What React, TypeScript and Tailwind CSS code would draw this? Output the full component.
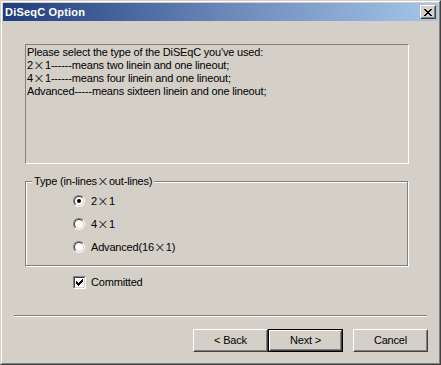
import React from "react";

const Times = () => (
  <span
    className="inline-block w-[12px] text-center text-[14px] leading-[13px] align-top font-extralight tracking-normal"
    style={{ fontFamily: '"DejaVu Sans", "Noto Sans", sans-serif' }}
  >
    ×
  </span>
);

function Radio({ checked, label }: { checked?: boolean; label: React.ReactNode }) {
  return (
    <div className="flex items-center h-[12px]">
      <div className="w-[12px] h-[12px] rounded-full border border-t-[#808080] border-l-[#808080] border-r-white border-b-white">
        <div className="w-full h-full rounded-full border border-t-[#404040] border-l-[#404040] border-r-[#d4d0c8] border-b-[#d4d0c8] bg-white flex items-center justify-center">
          {checked && <div className="w-[4px] h-[4px] rounded-full bg-black" />}
        </div>
      </div>
      <span className="ml-[6px] h-[13px] whitespace-nowrap">{label}</span>
    </div>
  );
}

function Button({ children, isDefault }: { children: React.ReactNode; isDefault?: boolean }) {
  const inner = (
    <div className="w-full h-full border border-t-white border-l-white border-r-[#404040] border-b-[#404040]">
      <div className="w-full h-full border border-t-[#d4d0c8] border-l-[#d4d0c8] border-r-[#808080] border-b-[#808080] flex items-center justify-center">
        {children}
      </div>
    </div>
  );
  return (
    <div className={"w-[75px] h-[23px] " + (isDefault ? "border border-black" : "")}>{inner}</div>
  );
}

export default function App() {
  return (
    <div
      className="w-[441px] h-[365px] border border-t-[#d4d0c8] border-l-[#d4d0c8] border-r-[#404040] border-b-[#404040] text-[11px] leading-[13px] text-black tracking-[-0.18px]"
      style={{ fontFamily: '"Liberation Sans", Arial, sans-serif' }}
    >
      <div className="w-full h-full border border-t-white border-l-white border-r-[#808080] border-b-[#808080] p-px bg-[#d4d0c8] flex flex-col">
        {/* Title bar */}
        <div className="h-[18px] flex items-center bg-gradient-to-r from-[#203d7c] via-[#6a86b8] to-[#a6c6ea] pl-[2px]">
          <span className="text-white font-bold text-[11px] tracking-[0.2px]">DiSeqC Option</span>
          <div className="ml-auto mr-[2px] w-[16px] h-[14px] border border-t-white border-l-white border-r-[#404040] border-b-[#404040]">
            <div className="w-full h-full border border-t-[#d4d0c8] border-l-[#d4d0c8] border-r-[#808080] border-b-[#808080] bg-[#d4d0c8] flex items-center justify-center">
              <svg width="8" height="7" viewBox="0 0 8 7" shapeRendering="crispEdges">
                <path d="M0 0h2v1h-2z M6 0h2v1h-2z M1 1h2v1h-2z M5 1h2v1h-2z M2 2h4v1h-4z M3 3h2v1h-2z M2 4h4v1h-4z M1 5h2v1h-2z M5 5h2v1h-2z M0 6h2v1h-2z M6 6h2v1h-2z" fill="#000" />
              </svg>
            </div>
          </div>
        </div>

        {/* Content */}
        <div className="flex-1 flex flex-col">
          <div className="ml-[22px] mt-[23px] w-[384px] h-[120px] border border-t-[#808080] border-l-[#808080] border-r-white border-b-white px-[1px] pt-[1px]">
            <div className="h-[13px]">Please select the type of the DiSEqC you've used:</div>
            <div className="h-[13px]">2<Times />1------means two linein and one lineout;</div>
            <div className="h-[13px]">4<Times />1------means four linein and one lineout;</div>
            <div className="h-[13px]">Advanced-----means sixteen linein and one lineout;</div>
          </div>

          <div className="relative ml-[22px] mt-[17px] w-[383px] h-[85px] border border-[#808080] shadow-[1px_1px_0_#fff,inset_1px_1px_0_#fff]">
            <div className="absolute left-[6px] top-[-7px] px-[2px] h-[13px] bg-[#d4d0c8] whitespace-nowrap">
              Type (in-lines<Times />out-lines)
            </div>
            <div className="pl-[47px] pt-[13px] flex flex-col gap-[11px]">
              <Radio checked label={<>2<Times />1</>} />
              <Radio label={<>4<Times />1</>} />
              <Radio label={<>Advanced(16<Times />1)</>} />
            </div>
          </div>

          <div className="ml-[70px] mt-[10px] h-[13px] flex items-center">
            <div className="w-[13px] h-[13px] border border-t-[#808080] border-l-[#808080] border-r-white border-b-white">
              <div className="w-full h-full border border-t-[#404040] border-l-[#404040] border-r-[#d4d0c8] border-b-[#d4d0c8] bg-white flex items-center justify-center">
                <svg width="7" height="7" viewBox="0 0 7 7" shapeRendering="crispEdges">
                  <path d="M6 0h1v3h-1z M5 1h1v3h-1z M4 2h1v3h-1z M3 3h1v3h-1z M2 4h1v3h-1z M1 3h1v3h-1z M0 2h1v3h-1z" fill="#000" />
                </svg>
              </div>
            </div>
            <span className="ml-[5px]">Committed</span>
          </div>

          <div className="ml-[11px] mt-[26px] w-[413px] h-[2px] border-t border-t-[#808080] border-b border-b-white" />

          <div className="mt-[12px] flex justify-end pr-[10px]">
            <Button>&lt; Back</Button>
            <Button isDefault>Next &gt;</Button>
            <div className="ml-[10px]">
              <Button>Cancel</Button>
            </div>
          </div>
        </div>
      </div>
    </div>
  );
}
